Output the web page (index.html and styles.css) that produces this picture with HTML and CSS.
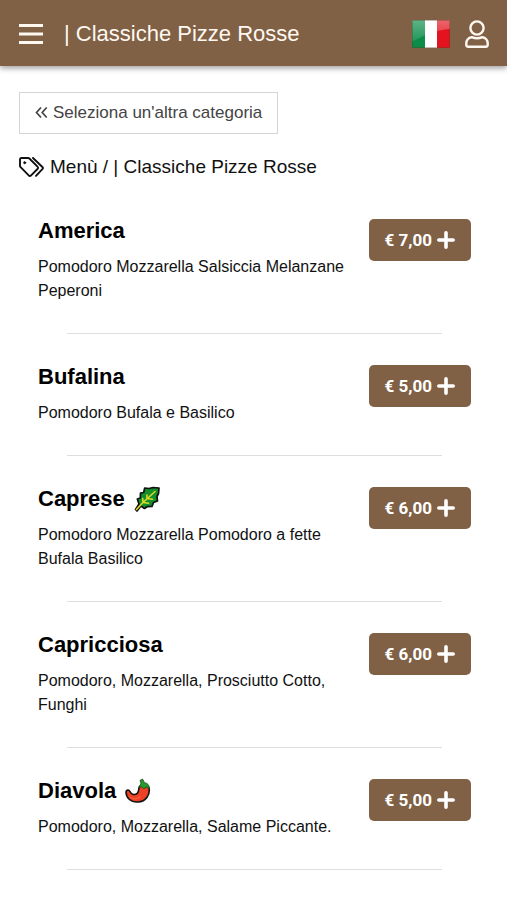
FILE: index.html
```html
<!DOCTYPE html>
<html lang="it">
<head>
<meta charset="utf-8">
<meta name="viewport" content="width=device-width, initial-scale=1">
<title>Classiche Pizze Rosse</title>
<link rel="stylesheet" href="styles.css">
</head>
<body>
<svg class="defs" aria-hidden="true">
  <symbol id="plus" viewBox="0 0 18 18"><path d="M9 1.8v14.4M1.8 9h14.4" fill="none" stroke="currentColor" stroke-width="3.6" stroke-linecap="round"/></symbol>
</svg>
<header class="topbar">
  <button class="icon-button" type="button" aria-label="Apri menu">
    <svg width="24" height="22" viewBox="0 0 24 22"><path d="M0 2.500h24M0 11h24M0 19.500h24" stroke="currentColor" stroke-width="3"/></svg>
  </button>
  <h1 class="topbar-title">| Classiche Pizze Rosse</h1>
  <button class="icon-button" type="button" aria-label="Italiano">
    <svg width="38" height="28" viewBox="0 0 38 28">
      <defs>
        <linearGradient id="shine" x1="0" y1="0" x2="0" y2="1"><stop offset="0" stop-color="#fff" stop-opacity=".35"/><stop offset="1" stop-color="#fff" stop-opacity=".08"/></linearGradient>
      </defs>
      <path fill="#0b8c49" d="M0 0h13v28H0z"/><path fill="#fff" d="M13 0h12v28H13z"/><path fill="#e3141f" d="M25 0h13v28H25z"/>
      <path fill="url(#shine)" d="M0 0h38v9C24 10 12 15 0 22z"/><path fill="none" stroke="#593c26" stroke-opacity=".35" d="M.5.5h37v27H.5z"/>
    </svg>
  </button>
  <button class="icon-button" type="button" aria-label="Profilo">
    <svg width="24" height="28" viewBox="0 0 24 28" fill="none" stroke="currentColor" stroke-width="2.400" stroke-linejoin="round"><circle cx="12" cy="8" r="6.600"/><path d="M6.700 17.200C3.500 17.600 1.300 20.300 1.300 23.200v1.600c0 1.100.8 1.900 1.900 1.900h17.600c1.100 0 1.900-.8 1.900-1.900v-1.600c0-2.900-2.200-5.600-5.400-6-3.300 1.400-7.300 1.400-10.600 0z"/></svg>
  </button>
</header>
<main class="content">
  <a class="back-link" href="#menu">
    <svg width="13" height="14" viewBox="0 0 13 14"><path d="M6 1.500L1.500 6.500 6 11.500M11.700 1.500L7.200 6.500l4.500 5" fill="none" stroke="currentColor" stroke-width="1.700"/></svg>
    <span>Seleziona un'altra categoria</span>
  </a>
  <h2 class="crumb" id="menu">
    <svg width="25" height="20" viewBox="0 0 25 20" fill="none" stroke="currentColor" stroke-width="1.900" stroke-linejoin="round" stroke-linecap="round"><path d="M1 2.300v6.400c0 .6.200 1.100.6 1.500l8.100 8.200c.7.800 1.700.8 2.400 0l6.400-6.400c.8-.7.800-1.700 0-2.400L10.400 1.500C10 1.100 9.500 1 9 1H2.300C1.500 1 1 1.500 1 2.300z"/><path d="M14 1l9.400 9c.7.700.7 1.500 0 2.200L17 18.900"/><circle cx="5.700" cy="5.700" r="1" fill="currentColor" stroke-width="1"/></svg>
    <span>Menù / | Classiche Pizze Rosse</span>
  </h2>
  <ul class="dishes">
    <li class="dish">
      <div class="dish-info"><h3 class="dish-name">America</h3><p class="dish-text">Pomodoro Mozzarella Salsiccia Melanzane Peperoni</p></div>
      <button class="price" type="button">€ 7,00 <svg width="18" height="18"><use href="#plus"/></svg></button>
    </li>
    <li class="dish">
      <div class="dish-info"><h3 class="dish-name">Bufalina</h3><p class="dish-text">Pomodoro Bufala e Basilico</p></div>
      <button class="price" type="button">€ 5,00 <svg width="18" height="18"><use href="#plus"/></svg></button>
    </li>
    <li class="dish">
      <div class="dish-info"><h3 class="dish-name">Caprese
        <svg width="26" height="26" viewBox="0 0 26 26" role="img" aria-label="Vegetariano"><path d="M1.500 23.500L5 18 3.300 13l3-1 .2-5 3.200-.5 1-4.500 4.300.5L19 1.500l6 .5-.5 5.500-1.500 3 .5 4.500-4 1.500-1.500 4-5 .2-2.500 1.800-3.500-2.500-4 5z" fill="#138f2c" stroke="#111" stroke-width="1.700" stroke-linejoin="round"/><path d="M2.500 23.500L9 16.500 21 5.500M9 16.500L8.700 12.500M13 13V9M9.500 16.500l5 .8M13.500 12.500l5 .7" fill="none" stroke="#d9d925" stroke-width="1.600" stroke-linecap="round"/></svg></h3><p class="dish-text">Pomodoro Mozzarella Pomodoro a fette Bufala Basilico</p></div>
      <button class="price" type="button">€ 6,00 <svg width="18" height="18"><use href="#plus"/></svg></button>
    </li>
    <li class="dish">
      <div class="dish-info"><h3 class="dish-name">Capricciosa</h3><p class="dish-text">Pomodoro, Mozzarella, Prosciutto Cotto, Funghi</p></div>
      <button class="price" type="button">€ 6,00 <svg width="18" height="18"><use href="#plus"/></svg></button>
    </li>
    <li class="dish">
      <div class="dish-info"><h3 class="dish-name">Diavola
        <svg width="26" height="26" viewBox="0 0 26 26" role="img" aria-label="Piccante"><path d="M14.500 8.500c3-1.500 7-1.500 9.500 1 1.500 7-3 14-11 14.500C5.500 24.500 1 19.500 1 14c0-2 2.800-2.800 3.800-.7 1.500 3.500 5 4.200 7.500 2 2-1.800 1-4.800 2.200-6.800z" fill="#ed4126" stroke="#111" stroke-width="1.600" stroke-linejoin="round"/><path d="M14 9.500l2-4.300-1-2.700L17.500 1l2 3.700c3.500.3 5 3 4.800 6.300l-3-2-2.500 1.700-2.200-1.900z" fill="#259b2b" stroke="#17471a" stroke-width=".8" stroke-linejoin="round"/><path d="M5 19c3 2.500 7 2.500 10-.3" fill="none" stroke="#f75a38" stroke-width="1.500" stroke-linecap="round"/></svg></h3><p class="dish-text">Pomodoro, Mozzarella, Salame Piccante.</p></div>
      <button class="price" type="button">€ 5,00 <svg width="18" height="18"><use href="#plus"/></svg></button>
    </li>
  </ul>
</main>
</body>
</html>
```
FILE: styles.css
```css
* { box-sizing: border-box; }
body {
  margin: 0;
  background: #fff;
  color: #111;
  font-family: "Liberation Sans", Arial, sans-serif;
}
h1, h2, h3, p, ul { margin: 0; padding: 0; }
svg { flex: none; display: block; }
button { font: inherit; border: 0; cursor: pointer; }
.defs { display: none; }

.topbar {
  display: flex;
  align-items: center;
  gap: 15px;
  padding: 20px 18px 18px 19px;
  background: #806146;
  color: #fff8f0;
  box-shadow: 0 2px 6px rgba(0, 0, 0, .4);
}
.icon-button { padding: 0; background: none; color: inherit; }
.topbar-title {
  flex: 1;
  padding-left: 6px;
  font-size: 22px;
  line-height: 28px;
  font-weight: 400;
}

.content { padding: 26px 19px; }
.back-link {
  display: inline-flex;
  align-items: center;
  gap: 5px;
  padding: 9px 15px;
  border: 1px solid #d5d5d5;
  color: #444;
  font-size: 17px;
  line-height: 22px;
  text-decoration: none;
}
.crumb {
  display: flex;
  align-items: center;
  gap: 6px;
  margin-top: 21px;
  font-size: 19px;
  line-height: 24px;
  font-weight: 400;
}

.dishes { list-style: none; margin-top: 9px; }
.dish {
  display: flex;
  flex-wrap: wrap;
  align-items: flex-start;
  justify-content: space-between;
  padding: 31px 17px 0 19px;
}
.dish::after {
  content: "";
  flex: 0 0 calc(100% - 58px);
  height: 1px;
  margin: 30px 0 0 29px;
  background: #dedede;
}
.dish-info { flex: 1; }
.dish-name {
  display: flex;
  align-items: center;
  gap: 9px;
  height: 24px;
  color: #000;
  font-size: 22px;
  line-height: 24px;
}
.dish-text {
  margin-top: 12px;
  font-size: 16px;
  line-height: 24px;
}
.price {
  display: flex;
  align-items: center;
  gap: 5px;
  margin-left: 16px;
  padding: 10px 16px;
  border-radius: 5px;
  background: #806146;
  color: #fff;
  font-family: Roboto, sans-serif;
  font-size: 17px;
  line-height: 22px;
  font-weight: 700;
}
```
